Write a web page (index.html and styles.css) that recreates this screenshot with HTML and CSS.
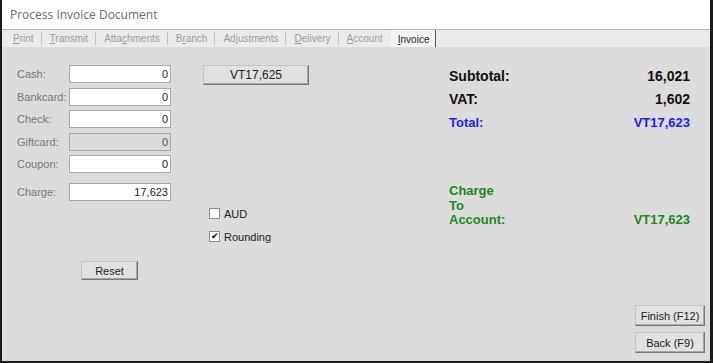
FILE: index.html
```html
<!DOCTYPE html>
<html lang="en">
<head>
    <meta charset="UTF-8">
    <title>Process Invoice Document</title>
    <link rel="stylesheet" href="styles.css">
</head>
<body>
    <div class="window">
        <div class="titlebar">Process Invoice Document</div>
        <div class="tabs">
            <span class="tab"><u>P</u>rint</span>
            <span class="tab"><u>T</u>ransmit</span>
            <span class="tab">Atta<u>c</u>hments</span>
            <span class="tab">B<u>r</u>anch</span>
            <span class="tab">Ad<u>j</u>ustments</span>
            <span class="tab"><u>D</u>elivery</span>
            <span class="tab"><u>A</u>ccount</span>
            <span class="tab active"><u>I</u>nvoice</span>
        </div>
        <div class="content">
            <div class="main">
                <div class="payments">
                    <div class="row"><label>Cash:</label><div class="field">0</div></div>
                    <div class="row"><label>Bankcard:</label><div class="field">0</div></div>
                    <div class="row"><label>Check:</label><div class="field">0</div></div>
                    <div class="row"><label>Giftcard:</label><div class="field disabled">0</div></div>
                    <div class="row"><label>Coupon:</label><div class="field">0</div></div>
                    <div class="row charge"><label>Charge:</label><div class="field">17,623</div></div>
                    <button class="btn reset">Reset</button>
                </div>
                <div class="middle">
                    <button class="btn amount">VT17,625</button>
                    <div class="checks">
                        <div class="check"><span class="box"></span>AUD</div>
                        <div class="check"><span class="box checked">&#10004;</span>Rounding</div>
                    </div>
                </div>
                <div class="summary">
                    <div class="line"><span>Subtotal:</span><span>16,021</span></div>
                    <div class="line"><span>VAT:</span><span>1,602</span></div>
                    <div class="line total"><span>Total:</span><span>VT17,623</span></div>
                    <div class="account">
                        <span>Charge<br>To<br>Account:</span>
                        <span>VT17,623</span>
                    </div>
                </div>
            </div>
            <div class="footer">
                <button class="btn nav">Finish (F12)</button>
                <button class="btn nav">Back (F9)</button>
            </div>
        </div>
    </div>
</body>
</html>
```

FILE: styles.css
```css
html, body {
    margin: 0;
    padding: 0;
}
body {
    font-family: "Liberation Sans", Arial, sans-serif;
    font-size: 11px;
    background: #1a1a1a;
}
.window {
    width: 713px;
    height: 363px;
    box-sizing: border-box;
    border-left: 2px solid #1a1a1a;
    border-right: 3px solid #1a1a1a;
    border-bottom: 2px solid #1a1a1a;
    background: #dcdcdc;
    display: flex;
    flex-direction: column;
}
.titlebar {
    height: 29px;
    line-height: 30px;
    padding-left: 8px;
    background: #fff;
    border-bottom: 1px solid #b4b4b4;
    font-family: "Open Sans", sans-serif;
    font-size: 12px;
    color: #6a6a6a;
}
.tabs {
    height: 17px;
    display: flex;
    align-items: center;
    padding-left: 3px;
    background: #ebebeb;
    color: #9c9c9c;
    font-size: 10px;
}
.tab {
    padding: 1px 7px 0 8px;
    border-right: 1px solid #c4c4c4;
    height: 12px;
    line-height: 12px;
}
.tab.active {
    color: #222;
    background: #f4f4f4;
    height: 16px;
    line-height: 17px;
    padding: 1px 6px 0 7px;
    border-right: 1px solid #555;
    margin-left: 1px;
}
.tab:nth-last-child(2) {
    border-right: none;
}
.content {
    flex: 1;
    display: flex;
    flex-direction: column;
}
.main {
    display: flex;
    padding: 18px 0 0 15px;
}
.payments {
    width: 154px;
    display: flex;
    flex-direction: column;
}
.row {
    display: flex;
    align-items: center;
    height: 18px;
    margin-bottom: 4.5px;
}
.row.charge {
    margin-top: 5px;
}
.row label {
    width: 52px;
    color: #777;
}
.field {
    height: 16px;
    line-height: 16px;
    border: 1px solid #a8a8a8;
    background: #fff;
    text-align: right;
    padding-right: 2px;
    width: 98px;
    color: #222;
}
.field.disabled {
    background: #dcdcdc;
    color: #555;
}
.btn {
    font-family: "Liberation Sans", Arial, sans-serif;
    font-size: 11px;
    color: #222;
    background: #e1e1e1;
    border: 1px solid;
    border-color: #c4c4c4 #777 #777 #c4c4c4;
    box-shadow: inset -1px -1px 0 #a8a8a8;
    padding: 0;
}
.reset {
    width: 57px;
    height: 19px;
    margin: 56px 0 0 64px;
}
.middle {
    margin-left: 32px;
    width: 106px;
}
.amount {
    width: 106px;
    height: 20px;
    font-size: 12px;
}
.checks {
    margin: 123px 0 0 6px;
    display: flex;
    flex-direction: column;
    gap: 12px;
}
.check {
    display: flex;
    align-items: center;
    gap: 4px;
    color: #222;
    height: 11px;
}
.box {
    width: 9px;
    height: 9px;
    border: 1px solid #8a8a8a;
    background: #fff;
    font-size: 9px;
    line-height: 9px;
    text-align: center;
    color: #000;
}
.summary {
    margin-left: 140px;
    width: 241px;
    font-weight: bold;
    font-size: 14px;
    color: #111;
}
.line {
    display: flex;
    justify-content: space-between;
    height: 23px;
    line-height: 23px;
}
.total {
    color: #1a1aff;
    font-size: 13px;
}
.account {
    margin-top: 50px;
    display: flex;
    justify-content: space-between;
    align-items: flex-end;
    color: #1a8a1a;
    font-size: 13px;
    line-height: 14.5px;
}
.footer {
    margin-top: auto;
    display: flex;
    flex-direction: column;
    align-items: flex-end;
    gap: 6px;
    padding: 0 5px 8px 0;
}
.nav {
    width: 70px;
    height: 21px;
}
```
